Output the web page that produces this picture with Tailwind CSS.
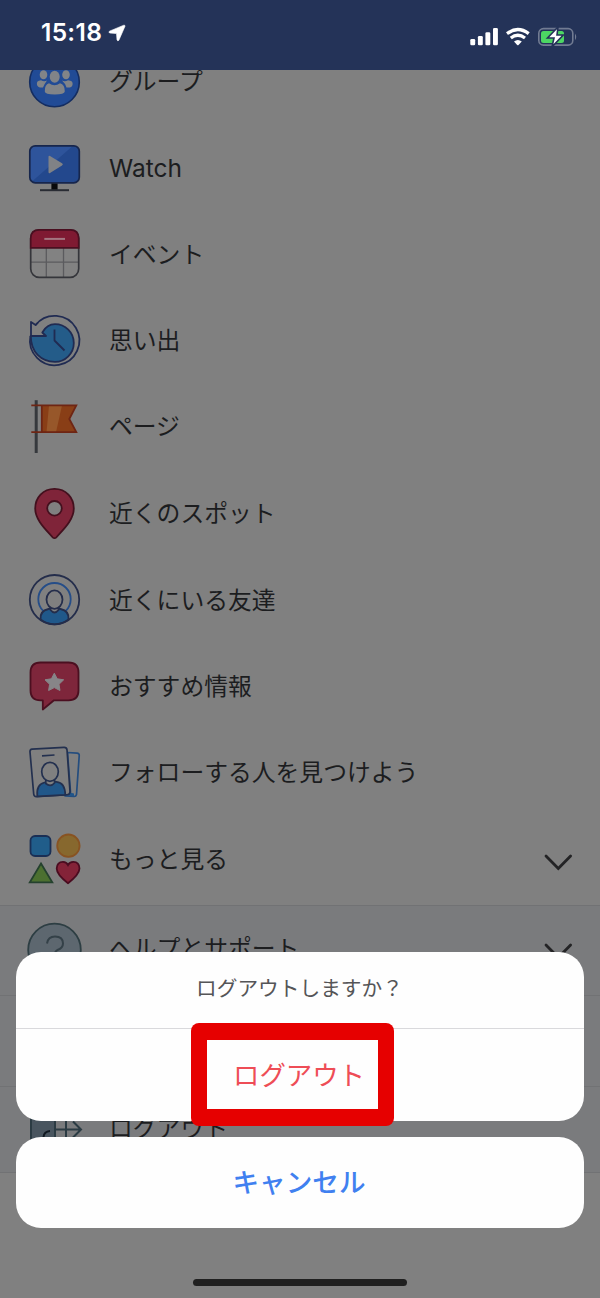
<!DOCTYPE html>
<html lang="ja">
<head>
<meta charset="utf-8">
<title>メニュー</title>
<script src="https://cdn.jsdelivr.net/npm/@tailwindcss/browser@4"></script>
</head>
<body class="bg-[#808080]">
<div class="relative w-[600px] h-[1298px] overflow-hidden bg-[#808080] font-['Noto_Sans_CJK_JP',sans-serif] text-[23.8px] text-[#1c1d1f] flex flex-col">
  <!-- Status bar -->
  <header class="relative z-10 h-[70px] shrink-0 bg-[#243358] flex justify-between pl-[41px] pr-[22px] text-white">
    <div class="flex h-[65px] items-center gap-[6px]">
      <span class="font-['Inter',sans-serif] font-semibold text-[24.5px] tracking-[0.3px] leading-none">15:18</span>
      <svg class="w-[18px] h-[18px]" viewBox="0 0 18 18"><path d="M15.8 1.2 1.4 7.2Q.4 8.2 1.6 9L8.5 9.6 9 16Q9.8 17.6 10.9 16.2L17 2.2Q17.1 .9 15.8 1.2Z" fill="#fff" stroke="#fff" stroke-width=".6"/></svg>
    </div>
    <svg class="w-[110px] h-[70px]" viewBox="468 0 110 70" fill="none">
      <g fill="#fff"><rect x="470.3" y="39" width="4.9" height="6.3" rx="1.3"/><rect x="477.9" y="36" width="4.9" height="9.3" rx="1.3"/><rect x="485.4" y="32.2" width="4.9" height="13.1" rx="1.3"/><rect x="493" y="28" width="4.9" height="17.3" rx="1.3"/>
      <path d="M514 41.6Q517.8 38.5 521.8 41.6L518.5 45Q517.8 45.6 517.2 45Z"/></g>
      <path d="M507 33.6Q517.8 25.4 528.7 33.6M510.8 38Q517.8 32.6 525 38" stroke="#fff" stroke-width="3.3"/>
      <rect x="538.8" y="28.6" width="34" height="16.5" rx="4.6" stroke="#717b92" stroke-width="1.6"/>
      <path d="M575 33.5Q577.5 36.8 575 40.2Z" fill="#717b92"/>
      <rect x="541" y="31" width="23" height="12" rx="2.5" fill="#4cd763"/>
      <path d="M558 27 547.5 38H554L552 46.8 563.3 35H557Z" fill="#fff" stroke="#243358" stroke-width="1.6"/>
    </svg>
  </header>

  <!-- Menu -->
  <ul class="-mt-[31.6px] h-[867px] shrink-0">
    <li class="flex h-[86.4px] items-center pl-6 gap-[25px]">
      <svg class="size-[60px]" viewBox="0 0 60 60"><circle cx="30.5" cy="30" r="24.8" fill="#214b96" stroke="#142d61" stroke-width="1.6"/><g fill="#818488"><ellipse cx="19.5" cy="22.8" rx="3.8" ry="4.5"/><ellipse cx="42" cy="22.8" rx="3.8" ry="4.5"/><path d="M13 33Q12 28.5 17 28.2 20 30 23 28.5 21 31 19 35.5Q14 36 13 33ZM48.5 33Q49.5 28.5 44 28.2 41 30 38 28.5 41 31 42.5 35.5Q48 36 48.5 33Z"/><ellipse cx="30.7" cy="24.7" rx="5" ry="6"/><path d="M25 31.2Q30.5 35.5 36 31.2 41 32.5 40.8 39.5 40.5 42.5 30.7 42.5T20.8 39.5Q20.5 32.5 25 31.2Z"/></g></svg>
      <span class="pb-[3px]">グループ</span>
    </li>
    <li class="flex h-[86.4px] items-center pl-6 gap-[25px]">
      <svg class="size-[60px]" viewBox="0 0 60 60"><rect x="5.8" y="7.8" width="49.5" height="37" rx="5.5" fill="#23488d"/><path d="M5.8 42V13.3Q5.8 7.8 11.3 7.8H49L8.5 43Z" fill="#2e549b"/><rect x="5.8" y="7.8" width="49.5" height="37" rx="5.5" fill="none" stroke="#17264c" stroke-width="1.7"/><path d="M24.5 18.8V34Q24.6 35.7 26 35L38 27.5Q39.8 26.4 38 25.3L26 18Q24.6 17.3 24.5 18.8Z" fill="#808286"/><path d="M27.4 45.6h6.2V52h-6.2Z" fill="#08090b"/><path d="M16 52.2H45" stroke="#292c33" stroke-width="2"/></svg>
      <span class="font-['Inter',sans-serif] text-[24.5px] pt-[1px]">Watch</span>
    </li>
    <li class="flex h-[86.4px] items-center pl-6 gap-[25px]">
      <svg class="size-[60px]" viewBox="0 0 60 60" fill="none"><rect x="6.7" y="5.8" width="48" height="47.5" rx="8.5" fill="#828282"/><path d="M6.7 38.2H54.7M22.3 24V53M39.5 24V53" stroke="#5b5b5e" stroke-width="1.3"/><rect x="6.7" y="5.8" width="48" height="47.5" rx="8.5" stroke="#35363b" stroke-width="1.7"/><path d="M6.7 23.8V14.3Q6.7 5.8 15.2 5.8H46.2Q54.7 5.8 54.7 14.3V23.8Z" fill="#7f1a32" stroke="#4a0f20" stroke-width="1.7"/><path d="M20.3 14.9H41" stroke="#a37680" stroke-width="2"/></svg>
      <span class="pb-[4px]">イベント</span>
    </li>
    <li class="flex h-[86.4px] items-center pl-6 gap-[25px]">
      <svg class="size-[60px]" viewBox="0 0 60 60" fill="none" stroke="#202b52" stroke-width="1.8" stroke-linejoin="round"><path d="M6.4 25A24.7 24.7 0 1 0 11.5 14"/><path d="M6.8 25H22L18.3 21.5Q23 13.2 31 13.2A18.8 18.8 0 0 1 31 50.8C17 50.8 6.8 41 6.8 25Z" fill="#245c89"/><path d="M7 25V11L11.6 14Q12 13.6 14 11.5"/><path d="M30.5 18.5V29.5L40.5 39.5"/></svg>
      <span class="pb-[3px]">思い出</span>
    </li>
    <li class="flex h-[86.4px] items-center pl-6 gap-[25px]">
      <svg class="size-[60px]" viewBox="0 0 60 60"><path d="M12.2 3.2V56" stroke="#36393d" stroke-width="3"/><path d="M17.3 8.4H52.3L45.3 22 52.3 35.2H17.3Z" fill="#893e16"/><path d="M25 8.4H38L32 35.2H22.5Z" fill="#97572a"/><path d="M7.3 8.4H52.3L45.3 22 52.3 35.2H7.3M17.8 8.4V35.2" fill="none" stroke="#6e2513" stroke-width="1.8"/></svg>
      <span class="pb-[4px]">ページ</span>
    </li>
    <li class="flex h-[86.4px] items-center pl-6 gap-[25px]">
      <svg class="size-[60px]" viewBox="0 0 60 60"><path fill-rule="evenodd" d="M30.5 4.8C19 4.8 11.2 13.5 11.2 24.5 11.2 37 24 47.5 28.6 53.3Q30.5 55 32.4 53.3C37 47.5 49.8 37 49.8 24.5 49.8 13.5 42 4.8 30.5 4.8ZM30.5 17a7.3 7.3 0 1 1 0 14.6 7.3 7.3 0 0 1 0-14.6Z" fill="#7f2439" stroke="#43101e" stroke-width="1.8"/></svg>
      <span class="pb-[4px]">近くのスポット</span>
    </li>
    <li class="flex h-[86.4px] items-center pl-6 gap-[25px]">
      <svg class="size-[60px]" viewBox="0 0 60 60" fill="none" stroke="#242d4b" stroke-width="1.8"><circle cx="30.5" cy="29.2" r="16.2" stroke="#254d88"/><path d="M16.6 49.5Q15.5 41 24.5 39Q28 38.5 28.5 36.5H32.5Q33 38.5 36.5 39 45.5 41 44.5 49.5 38 54.3 30.5 54.3T16.6 49.5Z" fill="#20588a"/><path d="M26.5 36V40Q30.5 45 34.5 40V36" fill="#808080"/><ellipse cx="30.5" cy="29.6" rx="8" ry="9.2" fill="#808080"/><circle cx="30.5" cy="29.7" r="24.7"/></svg>
      <span class="pb-[3px]">近くにいる友達</span>
    </li>
    <li class="flex h-[86.4px] items-center pl-6 gap-[25px]">
      <svg class="size-[60px]" viewBox="0 0 60 60"><path d="M16.5 6.5H44.5Q54.5 6.5 54.5 16.5V34.5Q54.5 44.3 44.5 44.3H30L18.8 53.5V44.3H16.5Q6.5 44.3 6.5 34.5V16.5Q6.5 6.5 16.5 6.5Z" fill="#7e263b" stroke="#4b0f20" stroke-width="1.8" stroke-linejoin="round"/><path d="M30.3 17.2 33.2 22.8 39.7 23.8 35 28.3 36 34.5 30.3 31.6 24.6 34.5 25.6 28.3 21 23.8 27.4 22.8Z" fill="#878588" stroke="#878588" stroke-width="1" stroke-linejoin="round"/></svg>
      <span class="pb-[3px]">おすすめ情報</span>
    </li>
    <li class="flex h-[86.4px] items-center pl-6 gap-[25px]">
      <svg class="size-[60px]" viewBox="0 0 60 60" fill="none" stroke="#23304f" stroke-width="1.7" stroke-linejoin="round"><path d="M43.5 9.5 53 10.2Q55.5 10.5 55.2 13L52.5 51.5Q52 53.6 50 53.5L41 53 46.5 49Z" stroke="#244d7e"/><path d="M41 52.5Q45.5 51.5 46 49.5L50 50.5V53.2Z" fill="#20558a" stroke="none"/><path d="M8 6.2 40 4.3Q42.7 4.2 43 6.8L46 48.5Q46 51.4 43.5 51.7L12.5 53.6Q10 53.7 9.7 51L6 9Q5.8 6.4 8 6.2Z" fill="#808080"/><path d="M13.3 53.3Q12 41.5 20.5 39.5 25 39 25 36H27.5Q28 38.5 32.5 38.8 41 39.5 41.3 51.8Z" fill="#215789"/><path d="M21.8 36V40.5Q26.5 44.5 30.5 40V36" fill="#808080"/><ellipse cx="26" cy="28.8" rx="8.3" ry="9.5" fill="#808080"/><path d="M18 12.8 30.5 12"/></svg>
      <span class="pb-[4px]">フォローする人を見つけよう</span>
    </li>
    <li class="flex h-[86.4px] items-center pl-6 pr-[27px] gap-[25px]">
      <svg class="size-[60px]" viewBox="0 0 60 60" stroke-width="1.8"><rect x="6.5" y="7" width="20" height="20" rx="4.5" fill="#205d8a" stroke="#1a2f55"/><circle cx="44.4" cy="16.7" r="11.2" fill="#87682e" stroke="#885322"/><path d="M17 34.5 28.3 53.4H5.8Z" fill="#4c7030" stroke="#24412e"/><path d="M44 54.2Q32.7 45.5 32.7 39.5 33 32.8 39 32.8 42.5 32.8 44 36 45.5 32.8 49.3 32.8 55.3 32.8 55.5 39.5 55.3 45.5 44 54.2Z" fill="#842338" stroke="#4a0c20"/></svg>
      <span class="flex-1 pb-[3px]">もっと見る</span>
      <svg class="w-[30px] h-[20px] mt-[5px]" viewBox="0 0 30 20" fill="none" stroke="#232325" stroke-width="2.8" stroke-linecap="round"><path d="M3 4 15.3 16.6 27.6 4"/></svg>
    </li>
  </ul>
  <section class="h-[268px] shrink-0 bg-[#7a7b7d] border-y border-[#717274]">
    <div class="flex h-[90px] items-center pl-6 pr-[27px] gap-[25px] border-b border-[#717274]">
      <svg class="size-[60px]" viewBox="0 0 60 60"><circle cx="30.5" cy="29" r="26.3" fill="#5d676f" stroke="#2d3e43" stroke-width="1.8"/><path d="M23 22.5Q24 15.5 31 15.5 39 15.5 39 22.5 39 27 33.5 29 30.5 30.5 30.5 35.5" fill="none" stroke="#344148" stroke-width="2"/></svg>
      <span class="flex-1 pb-[9px]">ヘルプとサポート</span>
      <svg class="w-[30px] h-[20px]" viewBox="0 0 30 20" fill="none" stroke="#232325" stroke-width="2.8" stroke-linecap="round"><path d="M3 4 15.3 16.6 27.6 4"/></svg>
    </div>
    <div class="h-[91px] border-b border-[#717274]"></div>
    <div class="flex h-[85px] items-center pl-6 gap-[25px]">
      <svg class="size-[60px]" viewBox="0 0 60 60" fill="none" stroke="#2b3b43" stroke-width="2"><path d="M7 6H31V54H7Z" fill="#49555f"/><path d="M31 29.5H57M49 21.5 57 29.5 49 37.5M42 14V46"/><path d="M19.5 37Q20 31.5 26 31" stroke="#101820"/></svg>
      <span class="pb-[7px]">ログアウト</span>
    </div>
  </section>

  <!-- Action sheet -->
  <div class="absolute z-20 inset-x-4 top-[952px] flex flex-col gap-4" role="dialog">
    <div class="relative h-[168.5px] rounded-[25px] bg-[#fefefe] flex flex-col text-center">
      <p class="h-[77px] flex items-center justify-center border-b border-[#d9d9dc] text-[20.7px] text-[#555557] pb-[4px] pr-[1px]">ログアウトしますか？</p>
      <button class="flex-1 flex items-center justify-center text-[26.4px] text-[#ee4d56] pb-[2px] pr-[2px]">ログアウト</button>
      <div class="absolute left-[175px] top-[71px] w-[203px] h-[102.5px] rounded-[8px] bg-[#e60000] [clip-path:polygon(evenodd,0_0,203px_0,203px_103px,0_103px,0_0,16px_17px,187px_17px,187px_86px,16px_86px,16px_17px)]"></div>
    </div>
    <button class="h-[91px] rounded-[25px] bg-[#fefefe] text-[26.6px] font-medium text-[#4080f0] pb-[2px] pr-[2px]">キャンセル</button>
  </div>
  <div class="absolute z-20 left-[193px] top-[1279px] w-[214px] h-[7px] rounded-full bg-[#202020]"></div>
</div>
</body>
</html>
